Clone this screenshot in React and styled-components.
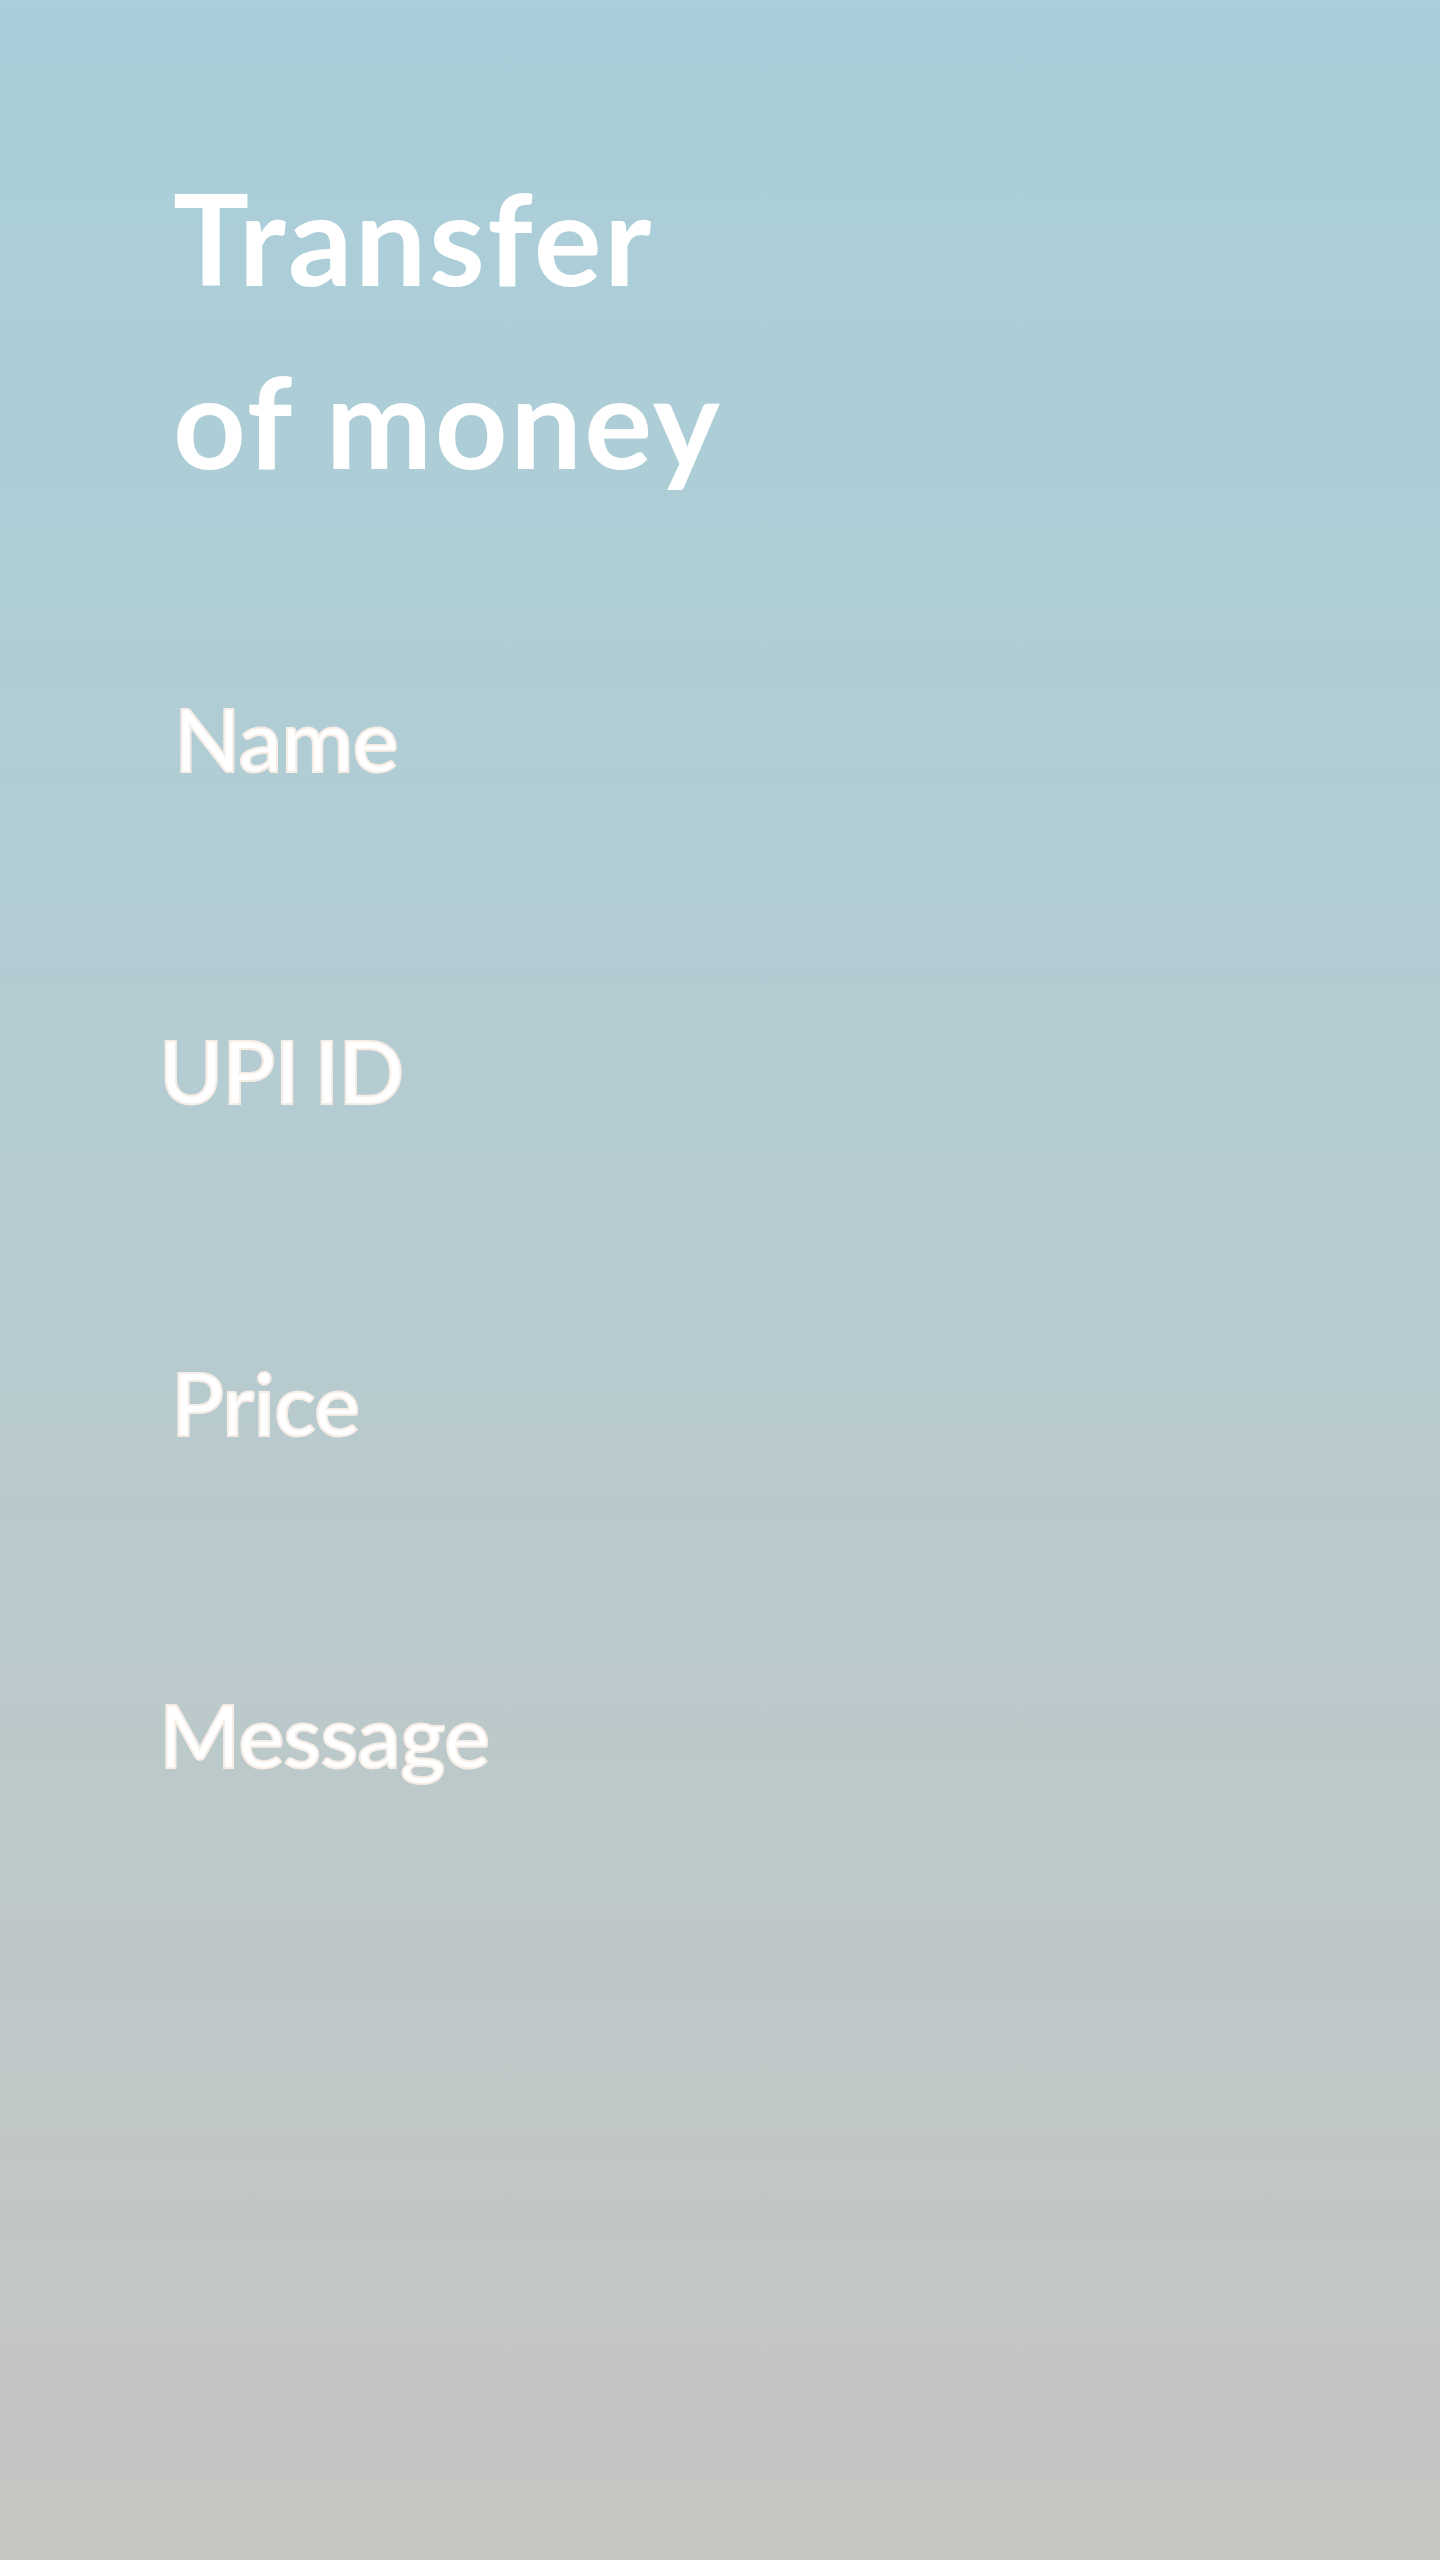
import React from "react";
import styled, { createGlobalStyle } from "styled-components";

const Global = createGlobalStyle`
  html, body { margin: 0; padding: 0; }
  body { font-family: Lato, "Open Sans", sans-serif; }
`;

const Page = styled.main`
  box-sizing: border-box;
  width: 1440px;
  min-height: 2560px;
  padding: 146px 0 0 168px;
  background: linear-gradient(180deg, #a9cfda 0%, #b6cbd0 50%, #c6c5c2 100%);
  display: flex;
  flex-direction: column;
`;

const Title = styled.h1`
  margin: 0 0 0 5px;
  font-size: 127px;
  line-height: 183px;
  font-weight: 700;
  letter-spacing: 2.5px;
  color: #ffffff;
`;

const Form = styled.form`
  margin-top: 177px;
  display: flex;
  flex-direction: column;
  gap: 232px;
`;

const Label = styled.label`
  display: block;
  margin-left: ${(p) => p.$indent || 0}px;
  font-size: 87px;
  line-height: 100px;
  font-weight: 600;
  letter-spacing: -1px;
  word-spacing: -5px;
  color: #ffffff;
  -webkit-text-stroke: 2px #f6ede6;
`;

const fields = [
  { label: "Name", indent: 6 },
  { label: "UPI ID", indent: -9 },
  { label: "Price", indent: 3 },
  { label: "Message", indent: -9 },
];

export default function App() {
  return (
    <>
      <Global />
      <Page>
        <Title>
          Transfer
          <br />
          of money
        </Title>
        <Form>
          {fields.map((f) => (
            <Label key={f.label} $indent={f.indent}>
              {f.label}
            </Label>
          ))}
        </Form>
      </Page>
    </>
  );
}
